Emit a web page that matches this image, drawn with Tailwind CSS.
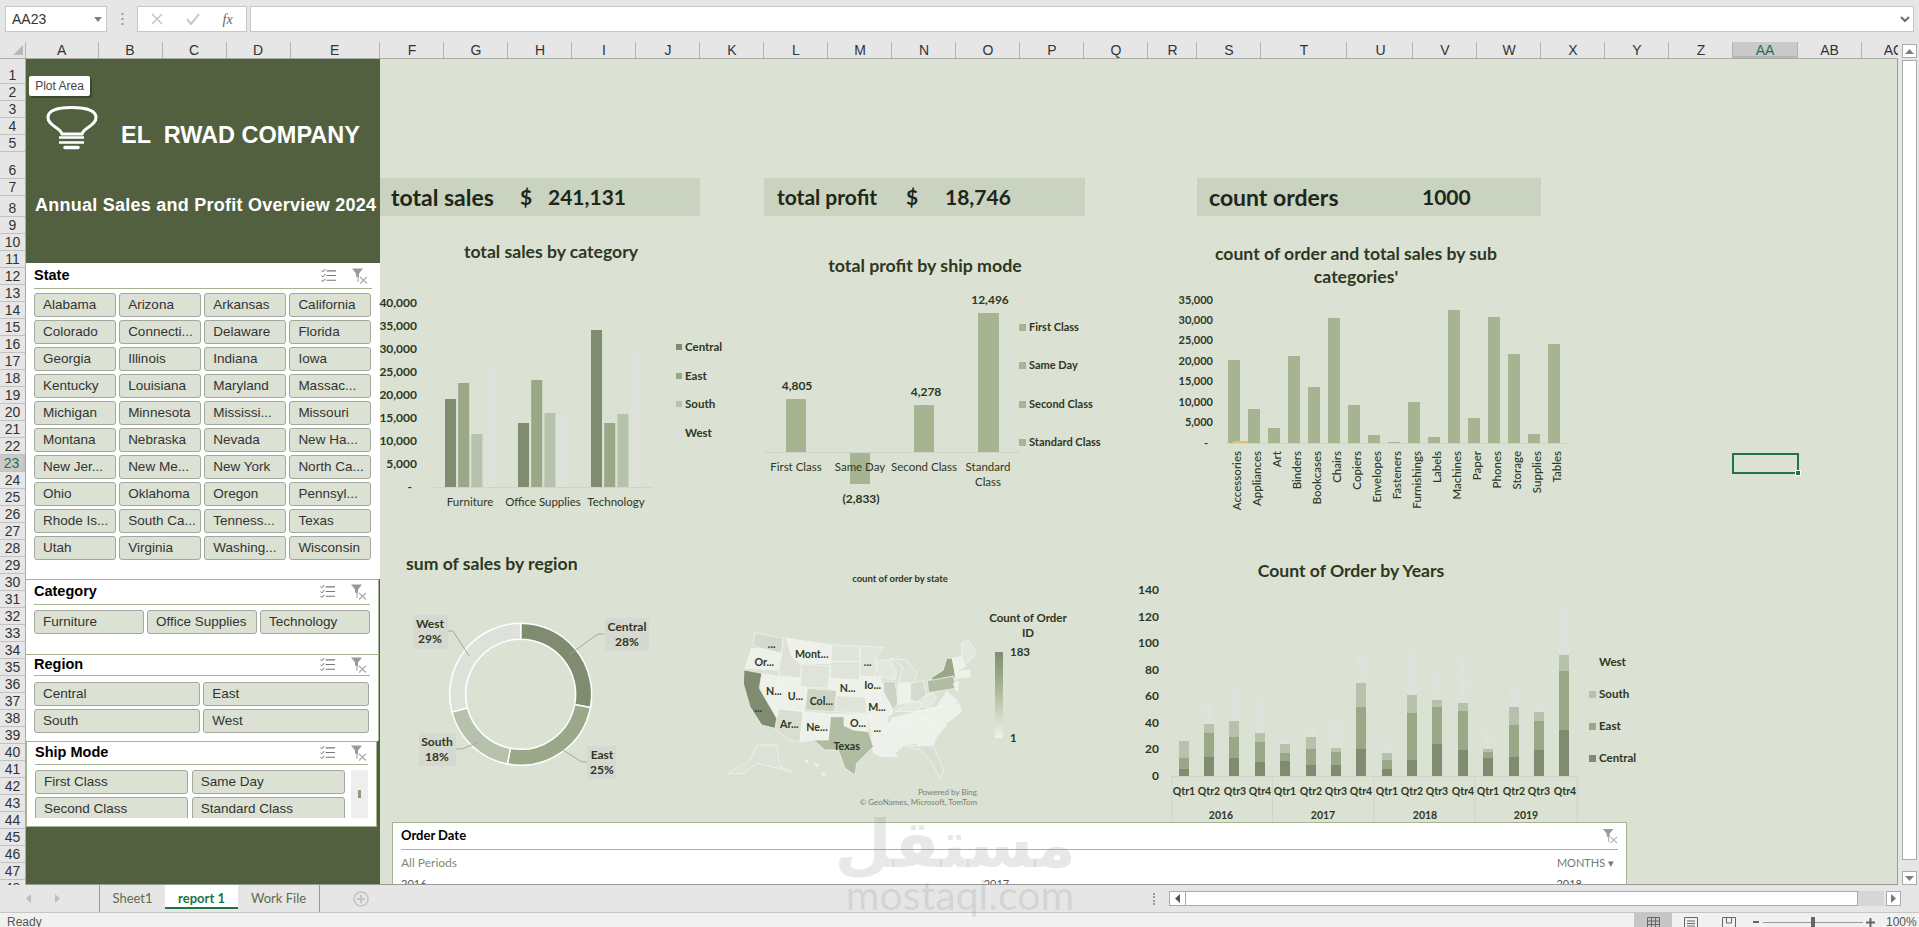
<!DOCTYPE html>
<html lang="en">
<head>
<meta charset="UTF-8">
<title>report 1 - Excel</title>
<script src="https://cdn.jsdelivr.net/npm/@tailwindcss/browser@4"></script>
</head>
<body class="relative w-[1919px] h-[927px] overflow-hidden bg-[#e6e6e6] font-['Liberation_Sans',sans-serif] text-[#222]">

<!-- shared icons -->
<svg width="0" height="0" class="absolute">
  <defs>
    <symbol id="multi" viewBox="0 0 16 15">
      <path d="M0.5 2l1.5 1.5 2.5-3M0.5 7.5l1.5 1.5 2.5-3M0.5 12.5l1.5 1.5 2.5-3" fill="none" stroke="#666" stroke-width="1"/>
      <path d="M6 2.500h10M6 7.500h10M6 12.500h10" stroke="#777" stroke-width="1.200"/>
    </symbol>
    <symbol id="clear" viewBox="0 0 16 16">
      <path d="M0 0.500h11l-4 5v4l-3-1v-3z" fill="#999"/>
      <path d="M6 8v6M8 9l7 6.500M15 9l-7 6.500" fill="none" stroke="#aaa" stroke-width="1.100"/>
    </symbol>
    <pattern id="dots" width="3" height="3" patternUnits="userSpaceOnUse">
      <rect width="3" height="3" fill="#e0e3db"/>
      <circle cx="1" cy="1" r=".6" fill="#d3d7cd"/>
    </pattern>
  </defs>
</svg>

<!-- name box + formula bar -->
<div class="h-[42px] flex items-start pt-[6px] pl-[5px]">
  <div class="w-[102px] h-[26px] bg-white border border-[#c6c6c6] flex items-center justify-between pl-[6px] pr-[4px] text-[14px] text-[#333]">AA23<svg width="8" height="5"><path d="M0 0h8l-4 5z" fill="#7c8471"/></svg></div>
  <div class="w-[30px] h-[26px] flex items-center justify-center"><svg width="3" height="12"><path d="M1.500 0v2M1.500 5v2M1.500 10v2" stroke="#999" stroke-width="2"/></svg></div>
  <div class="w-[110px] h-[26px] bg-white border border-[#c6c6c6] flex items-center justify-around px-[2px]">
    <svg width="12" height="12"><path d="M1 1l10 10M11 1L1 11" stroke="#c4c4c4" stroke-width="1.500"/></svg>
    <svg width="14" height="12"><path d="M1 6l4 5 8-10" fill="none" stroke="#c4c4c4" stroke-width="2"/></svg>
    <span class="font-['Liberation_Serif',serif] italic text-[14px] text-[#666]">fx</span>
  </div>
  <div class="ml-[3px] w-[1664px] h-[26px] bg-white border border-[#c6c6c6] flex items-center justify-end pr-[3px]"><svg width="10" height="7"><path d="M1 1l4 4 4-4" fill="none" stroke="#6b7263" stroke-width="2"/></svg></div>
</div>

<!-- column headers -->
<div class="h-[17px] flex overflow-hidden border-b border-[#ababab] text-[14px] leading-[17px] text-center [&>div]:shrink-0 [&>div]:border-r [&>div]:border-[#b5b5b5] text-[#333]">
  <div class="w-[26px] relative"><svg class="absolute left-[13px] top-[3px]" width="10" height="10"><path d="M10 0v10H0z" fill="#b9b9b9"/></svg></div>
  <div class="w-[72.500px]">A</div><div class="w-[64px]">B</div><div class="w-[64px]">C</div><div class="w-[64px]">D</div><div class="w-[89.500px]">E</div>
  <div class="w-[64px] pl-px">F</div><div class="w-[64px] pl-px">G</div><div class="w-[64px] pl-px">H</div><div class="w-[64px] pl-px">I</div><div class="w-[64px] pl-px">J</div><div class="w-[64px] pl-px">K</div>
  <div class="w-[64px] pl-px">L</div><div class="w-[64px] pl-px">M</div><div class="w-[64px] pl-px">N</div><div class="w-[64px] pl-px">O</div><div class="w-[64px] pl-px">P</div><div class="w-[64px] pl-px">Q</div>
  <div class="w-[49px] pl-px">R</div><div class="w-[64px] pl-px">S</div><div class="w-[86px] pl-px">T</div><div class="w-[66px] pl-[2px]">U</div><div class="w-[64px] pl-px">V</div><div class="w-[64px] pl-px">W</div>
  <div class="w-[64px] pl-px">X</div><div class="w-[64px] pl-px">Y</div><div class="w-[64px] pl-px">Z</div>
  <div class="w-[65px] bg-[#c9c9c9] border-b-2 border-b-[#217346] text-[#217346]">AA</div>
  <div class="w-[64px]">AB</div><div class="w-[64px]">AC</div>
</div>

<div class="h-[826px] flex">
  <!-- row headers -->
  <div class="w-[26px] h-[826px] overflow-hidden bg-[#e6e6e6] text-[14px] leading-[16px] text-[#333] text-center border-r border-[#ababab] [&>div]:border-b [&>div]:border-[#c2c2c2] [&>div]:flex [&>div]:items-end [&>div]:justify-center">
    <div class="h-[25px]">1</div><div class="h-[17px]">2</div><div class="h-[17px]">3</div><div class="h-[17px]">4</div><div class="h-[17px]">5</div>
    <div class="h-[27px]">6</div><div class="h-[17px]">7</div><div class="h-[21px]">8</div><div class="h-[17px]">9</div><div class="h-[17px]">10</div>
    <div class="h-[17px]">11</div><div class="h-[17px]">12</div><div class="h-[17px]">13</div><div class="h-[17px]">14</div><div class="h-[17px]">15</div>
    <div class="h-[17px]">16</div><div class="h-[17px]">17</div><div class="h-[17px]">18</div><div class="h-[17px]">19</div><div class="h-[17px]">20</div>
    <div class="h-[17px]">21</div><div class="h-[17px]">22</div>
    <div class="h-[17px] bg-[#c9c9c9] text-[#217346] border-r-2 border-r-[#217346]">23</div>
    <div class="h-[17px]">24</div><div class="h-[17px]">25</div><div class="h-[17px]">26</div><div class="h-[17px]">27</div><div class="h-[17px]">28</div>
    <div class="h-[17px]">29</div><div class="h-[17px]">30</div><div class="h-[17px]">31</div><div class="h-[17px]">32</div><div class="h-[17px]">33</div>
    <div class="h-[17px]">34</div><div class="h-[17px]">35</div><div class="h-[17px]">36</div><div class="h-[17px]">37</div><div class="h-[17px]">38</div>
    <div class="h-[17px]">39</div><div class="h-[17px]">40</div><div class="h-[17px]">41</div><div class="h-[17px]">42</div><div class="h-[17px]">43</div>
    <div class="h-[17px]">44</div><div class="h-[17px]">45</div><div class="h-[17px]">46</div><div class="h-[17px]">47</div><div class="h-[17px]">48</div>
  </div>

  <!-- sheet -->
  <div class="relative w-[1872px] h-[826px] bg-[#dbe1d3] overflow-hidden border-b border-[#9a9a9a]">

    <!-- left dark panel -->
    <div class="w-[354px] h-[826px] bg-[#526040] flex flex-col">
      <div class="h-[204px] shrink-0 relative text-white font-bold">
        <svg class="absolute left-[20px] top-[47px]" width="54" height="46" viewBox="47 107 54 46">
          <path d="M63 135C61 128 49 127 49 118.500C49 111 60 108.500 72.500 108.500C85 108.500 97 111 97 118.500C97 127 85 128 83 135Z" fill="none" stroke="#fff" stroke-width="3"/>
          <path d="M60 138.500H85M60 143.500H85" stroke="#fff" stroke-width="2.500"/>
          <path d="M66 148.500H79" stroke="#fff" stroke-width="3.500" stroke-linecap="round"/>
        </svg>
        <div class="absolute left-[95px] top-[63px] text-[23.500px] leading-[26px] whitespace-pre">EL  RWAD COMPANY</div>
        <div class="absolute left-[9px] top-[136px] text-[18px] leading-[20px] tracking-[.25px] whitespace-nowrap">Annual Sales and Profit Overview 2024</div>
        <div class="absolute left-[3px] top-[17px] w-[61px] h-[20px] bg-white rounded-[2px] text-[#444] font-normal text-[12px] leading-[20px] text-center shadow-[2px_2px_0_#3c4630]">Plot Area</div>
      </div>

      <!-- State slicer -->
      <div class="h-[316px] shrink-0 bg-white px-[8px]">
        <div class="h-[26px] flex items-center justify-between border-b border-[#a7b492] text-[14.500px] font-bold text-black">State
          <span class="flex gap-[16px] mr-[4px]"><svg width="15" height="15"><use href="#multi"/></svg><svg width="16" height="16"><use href="#clear"/></svg></span>
        </div>
        <div class="mt-[4px] w-[337px] grid grid-cols-4 gap-x-[3.500px] gap-y-[3px] text-[13.500px] text-[#333] [&>div]:h-[24px] [&>div]:leading-[22px] [&>div]:pl-[8px] [&>div]:bg-[#dbe1d3] [&>div]:border [&>div]:border-[#a3a79d] [&>div]:rounded-[3px] [&>div]:whitespace-nowrap [&>div]:overflow-hidden">
          <div>Alabama</div><div>Arizona</div><div>Arkansas</div><div>California</div>
          <div>Colorado</div><div>Connecti...</div><div>Delaware</div><div>Florida</div>
          <div>Georgia</div><div>Illinois</div><div>Indiana</div><div>Iowa</div>
          <div>Kentucky</div><div>Louisiana</div><div>Maryland</div><div>Massac...</div>
          <div>Michigan</div><div>Minnesota</div><div>Mississi...</div><div>Missouri</div>
          <div>Montana</div><div>Nebraska</div><div>Nevada</div><div>New Ha...</div>
          <div>New Jer...</div><div>New Me...</div><div>New York</div><div>North Ca...</div>
          <div>Ohio</div><div>Oklahoma</div><div>Oregon</div><div>Pennsyl...</div>
          <div>Rhode Is...</div><div>South Ca...</div><div>Tenness...</div><div>Texas</div>
          <div>Utah</div><div>Virginia</div><div>Washing...</div><div>Wisconsin</div>
        </div>
      </div>

      <!-- Category slicer -->
      <div class="h-[75px] shrink-0 w-[353px] bg-white px-[8px] border-t border-r border-[#a7b492]">
        <div class="h-[25px] flex items-center justify-between border-b border-[#a7b492] text-[14.500px] font-bold text-black">Category
          <span class="flex gap-[16px] mr-[3px]"><svg width="15" height="15"><use href="#multi"/></svg><svg width="16" height="16"><use href="#clear"/></svg></span>
        </div>
        <div class="mt-[5px] flex gap-[3.500px] text-[13.500px] text-[#333] [&>div]:w-[109.500px] [&>div]:h-[24px] [&>div]:leading-[22px] [&>div]:pl-[8px] [&>div]:bg-[#dbe1d3] [&>div]:border [&>div]:border-[#a3a79d] [&>div]:rounded-[3px]">
          <div>Furniture</div><div>Office Supplies</div><div>Technology</div>
        </div>
      </div>

      <!-- Region slicer -->
      <div class="h-[87px] shrink-0 w-[353px] bg-white px-[8px] border-t border-r border-[#a7b492]">
        <div class="h-[21px] flex items-center justify-between border-b border-[#a7b492] text-[14.500px] font-bold text-black">Region
          <span class="flex gap-[16px] mr-[3px]"><svg width="15" height="15"><use href="#multi"/></svg><svg width="16" height="16"><use href="#clear"/></svg></span>
        </div>
        <div class="mt-[6px] w-[335px] grid grid-cols-2 gap-x-[3.500px] gap-y-[3px] text-[13.500px] text-[#333] [&>div]:h-[24px] [&>div]:leading-[22px] [&>div]:pl-[8px] [&>div]:bg-[#dbe1d3] [&>div]:border [&>div]:border-[#a3a79d] [&>div]:rounded-[3px]">
          <div>Central</div><div>East</div><div>South</div><div>West</div>
        </div>
      </div>

      <!-- Ship Mode slicer -->
      <div class="h-[86px] shrink-0 w-[351px] bg-white px-[8px] border border-[#a7b492]">
        <div class="h-[23px] flex items-center justify-between border-b border-[#a7b492] text-[14.500px] font-bold text-black">Ship Mode
          <span class="flex gap-[16px] mr-[1px]"><svg width="15" height="15"><use href="#multi"/></svg><svg width="16" height="16"><use href="#clear"/></svg></span>
        </div>
        <div class="mt-[5px] h-[48px] flex overflow-hidden">
          <div class="w-[311px] grid grid-cols-2 gap-x-[3.500px] gap-y-[3px] text-[13.500px] text-[#333] [&>div]:h-[24px] [&>div]:leading-[22px] [&>div]:pl-[8px] [&>div]:bg-[#dbe1d3] [&>div]:border [&>div]:border-[#a3a79d] [&>div]:rounded-[3px]">
            <div>First Class</div><div>Same Day</div><div>Second Class</div><div>Standard Class</div>
          </div>
          <div class="ml-[6px] w-[17px] h-[48px] bg-[#eeeeee] flex items-center justify-center"><div class="w-[3px] h-[8px] bg-[#8c9880]"></div></div>
        </div>
      </div>
    </div>

    <!-- KPI cards -->
    <div class="absolute left-[354px] top-[119px] w-[320px] h-[38px] bg-[#c9d3bf] flex items-center pl-[11px] font-['Lato',sans-serif] font-bold text-[21px] text-[#20261a]"><span class="w-[129px] text-[23px]">total sales</span><span class="w-[28px]">$</span><span>241,131</span></div>
    <div class="absolute left-[738px] top-[119px] w-[321px] h-[38px] bg-[#c9d3bf] flex items-center pl-[13px] font-['Lato',sans-serif] font-bold text-[21px] text-[#20261a]"><span class="w-[129px]">total profit</span><span class="w-[39px]">$</span><span>18,746</span></div>
    <div class="absolute left-[1171px] top-[119px] w-[344px] h-[38px] bg-[#c9d3bf] flex items-center pl-[12px] font-['Lato',sans-serif] font-bold text-[21px] text-[#20261a]"><span class="w-[213px] text-[23px]">count orders</span><span>1000</span></div>

    <!-- charts: viewBox uses window coordinates -->
    <svg class="absolute left-0 top-0 font-['Lato',sans-serif]" width="1872" height="826" viewBox="26 59 1872 826">
      <!-- total sales by category -->
      <g fill="#2e3722">
        <text x="551" y="258" text-anchor="middle" font-size="17.600" font-weight="700">total sales by category</text>
        <g font-size="12" font-weight="700" text-anchor="end">
          <text x="417" y="307">40,000</text><text x="417" y="330">35,000</text><text x="417" y="353">30,000</text><text x="417" y="376">25,000</text><text x="417" y="399">20,000</text><text x="417" y="422">15,000</text><text x="417" y="445">10,000</text><text x="417" y="468">5,000</text><text x="412" y="491">-</text>
        </g>
        <g font-size="11.500" text-anchor="middle">
          <text x="470" y="506">Furniture</text><text x="543" y="506">Office Supplies</text><text x="616" y="506">Technology</text>
        </g>
        <g font-size="11.500" font-weight="700">
          <text x="685" y="351">Central</text><text x="685" y="380">East</text><text x="685" y="408">South</text><text x="685" y="437">West</text>
        </g>
      </g>
      <rect x="676" y="344" width="6" height="6" fill="#7f8c6f"/><rect x="676" y="373" width="6" height="6" fill="#9ba888"/><rect x="676" y="401" width="6" height="6" fill="#b6c2ab"/><rect x="676" y="430" width="6" height="6" fill="url(#dots)"/>
      <path d="M434 487.500H653" stroke="#cfd4c8"/>
      <g id="cat-bars"></g>

      <!-- total profit by ship mode -->
      <g fill="#2e3722">
        <text x="925" y="272" text-anchor="middle" font-size="17.800" font-weight="700">total profit by ship mode</text>
        <g font-size="12" font-weight="700" text-anchor="middle">
          <text x="797" y="390">4,805</text><text x="990" y="304">12,496</text><text x="926" y="396">4,278</text><text x="861" y="503">(2,833)</text>
        </g>
      </g>
      <path d="M764 452.500H1020" stroke="#cfd4c8"/>
      <g fill="#a7b492">
        <rect x="786" y="399" width="20" height="53"/><rect x="850" y="453" width="20" height="31"/><rect x="914" y="405" width="20" height="47"/><rect x="978" y="313" width="21" height="139"/>
        <rect x="1019" y="324" width="7" height="7"/><rect x="1019" y="362" width="7" height="7"/><rect x="1019" y="401" width="7" height="7"/><rect x="1019" y="439" width="7" height="7"/>
      </g>
      <g fill="#2e3722">
        <g font-size="11.500" text-anchor="middle">
          <text x="796" y="471">First Class</text><text x="860" y="471">Same Day</text><text x="924" y="471">Second Class</text><text x="988" y="471">Standard</text><text x="988" y="486">Class</text>
        </g>
        <g font-size="11" font-weight="700">
          <text x="1029" y="331">First Class</text><text x="1029" y="369">Same Day</text><text x="1029" y="408">Second Class</text><text x="1029" y="446">Standard Class</text>
        </g>
      </g>

      <!-- count of order and total sales by sub categories -->
      <g fill="#2e3722">
        <text x="1356" y="260" text-anchor="middle" font-size="17.600" font-weight="700">count of order and total sales by sub</text>
        <text x="1356" y="283" text-anchor="middle" font-size="17.600" font-weight="700">categories'</text>
        <g font-size="11" font-weight="700" text-anchor="end">
          <text x="1213" y="304">35,000</text><text x="1213" y="324">30,000</text><text x="1213" y="344">25,000</text><text x="1213" y="365">20,000</text><text x="1213" y="385">15,000</text><text x="1213" y="406">10,000</text><text x="1213" y="426">5,000</text><text x="1208" y="447">-</text>
        </g>
      </g>
      <path d="M1226 443.500H1566" stroke="#cfd4c8"/>
      <g id="sub-bars"></g>
      <rect x="1233" y="441" width="15" height="2" fill="#e0c070"/>
      <g fill="#2e3722" font-size="11.500" font-weight="500" text-anchor="end">
        <text transform="translate(1241 451) rotate(-90)">Accessories</text><text transform="translate(1261 451) rotate(-90)">Appliances</text><text transform="translate(1281 451) rotate(-90)">Art</text><text transform="translate(1301 451) rotate(-90)">Binders</text><text transform="translate(1321 451) rotate(-90)">Bookcases</text><text transform="translate(1341 451) rotate(-90)">Chairs</text><text transform="translate(1361 451) rotate(-90)">Copiers</text><text transform="translate(1381 451) rotate(-90)">Envelopes</text><text transform="translate(1401 451) rotate(-90)">Fasteners</text><text transform="translate(1421 451) rotate(-90)">Furnishings</text><text transform="translate(1441 451) rotate(-90)">Labels</text><text transform="translate(1461 451) rotate(-90)">Machines</text><text transform="translate(1481 451) rotate(-90)">Paper</text><text transform="translate(1501 451) rotate(-90)">Phones</text><text transform="translate(1521 451) rotate(-90)">Storage</text><text transform="translate(1541 451) rotate(-90)">Supplies</text><text transform="translate(1561 451) rotate(-90)">Tables</text>
      </g>

      <!-- sum of sales by region -->
      <text x="406" y="570" font-size="17.600" font-weight="700" fill="#2e3722">sum of sales by region</text>
      <g stroke="#fff" stroke-width="1.500">
        <path d="M520.700 623.300A71 71 0 0 1 590.400 707.600L574.700 704.600A55 55 0 0 0 520.700 639.300Z" fill="#7f8c6f"/>
        <path d="M590.400 707.600A71 71 0 0 1 507.400 764L510.400 748.300A55 55 0 0 0 574.700 704.600Z" fill="#9ba888"/>
        <path d="M507.400 764A71 71 0 0 1 451.900 711.900L467.400 708A55 55 0 0 0 510.400 748.300Z" fill="#b6c2ab"/>
        <path d="M451.900 711.900A71 71 0 0 1 520.700 623.300L520.700 639.300A55 55 0 0 0 467.400 708Z" fill="url(#dots)"/>
      </g>
      <g fill="#d6d9d2">
        <rect x="413" y="615" width="35" height="34"/><rect x="605" y="618" width="44" height="33"/><rect x="587" y="746" width="29" height="33"/><rect x="419" y="733" width="37" height="33"/>
      </g>
      <g fill="none" stroke="#a5a9a0">
        <path d="M448 631H453L469 656"/><path d="M604 634H598L570 654"/><path d="M587 762H582L558 747"/><path d="M456 749H462L479 742"/>
      </g>
      <g fill="#2e3722" font-size="12" font-weight="700" text-anchor="middle">
        <text x="430" y="628">West</text><text x="430" y="643">29%</text><text x="627" y="631">Central</text><text x="627" y="646">28%</text><text x="602" y="759">East</text><text x="602" y="774">25%</text><text x="437" y="746">South</text><text x="437" y="761">18%</text>
      </g>

      <!-- count of order by state -->
      <text x="900" y="582" text-anchor="middle" font-size="9.500" font-weight="700" fill="#2e3722">count of order by state</text>
      <svg x="720" y="560" width="360" height="260" viewBox="0 0 1080 780">
        <g stroke="#f5f7f2" stroke-width="2" fill="#eef1ea">
          <path d="M105 218L190 235L185 280L120 265L100 255Z" fill="#d4dacd"/>
          <path d="M95 265L120 265L185 280L172 330L75 325Z"/>
          <path d="M125 340L190 352L175 445L170 475L118 385Z"/>
          <path d="M190 235L200 235L215 290L245 315L240 355L175 345L185 280Z" fill="#dde1d8"/>
          <path d="M200 235L335 255L330 310L245 310L215 290Z"/>
          <path d="M245 312L330 318L325 385L240 380Z" fill="#dfe3da"/>
          <path d="M190 352L240 355L240 380L262 385L250 455L178 445Z"/>
          <path d="M178 447L250 455L240 545L205 540L165 505L170 475Z" fill="#d9ded2"/>
          <path d="M262 385L350 392L345 455L255 450Z" fill="#cdd4c4"/>
          <path d="M250 455L330 462L325 540L280 540L240 545Z"/>
          <path d="M335 255L418 258L420 305L333 305Z" fill="#dfe3da"/>
          <path d="M333 305L420 305L420 360L330 355Z" fill="#dfe3da"/>
          <path d="M330 357L420 362L435 410L350 405L350 392L327 385Z"/>
          <path d="M350 407L437 412L440 460L345 455Z" fill="#dfe3da"/>
          <path d="M330 462L442 462L445 515L395 510L372 495L372 470L330 470Z"/>
          <path d="M420 258L490 262L465 300L470 330L465 350L420 350Z" fill="#e1e5dc"/>
          <path d="M420 350L480 350L490 385L480 395L432 395Z"/>
          <path d="M433 397L490 392L520 440L515 465L445 470L440 430Z"/>
          <path d="M445 472L505 468L495 520L455 525Z"/>
          <path d="M455 527L495 525L495 545L535 590L490 590L460 580Z"/>
          <path d="M468 300L510 300L530 335L525 360L480 350L470 325Z" fill="#e3e7de"/>
          <path d="M490 365L525 365L535 430L520 450L490 395Z" fill="#ccd3c3"/>
          <path d="M510 295L560 300L590 340L580 370L535 365L550 320Z" fill="#dde1d8"/>
          <path d="M535 370L570 370L570 425L533 435Z"/>
          <path d="M572 370L610 362L620 405L590 425L572 420Z" fill="#d6dbcf"/>
          <path d="M525 455L570 425L590 425L615 430L590 455Z" fill="#e3e7de"/>
          <path d="M515 475L590 455L640 445L610 480L510 490Z"/>
          <path d="M495 490L535 488L535 575L498 570Z"/>
          <path d="M537 488L575 483L590 550L550 555L540 570Z"/>
          <path d="M578 480L620 478L650 530L640 555L593 555Z"/>
          <path d="M555 558L640 558L672 630L660 655L630 600L600 570Z" fill="#dadfd3"/>
          <path d="M622 478L660 475L680 495L652 528Z"/>
          <path d="M612 478L640 445L715 430L725 455L680 490Z"/>
          <path d="M590 455L650 440L680 395L715 425L640 445Z"/>
          <path d="M618 405L640 400L650 415L625 445L600 435Z" fill="#e3e7de"/>
          <path d="M622 362L700 348L708 385L626 398Z" fill="#b1bda3"/>
          <path d="M632 355L670 330L680 295L697 295L708 360L700 348L640 360Z" fill="#9ba888"/>
          <path d="M725 250L745 240L770 280L735 315L725 310Z" fill="#e3e7de"/>
          <path d="M697 295L725 290L735 320L705 335Z"/>
          <path d="M705 335L750 330L750 350L708 355Z"/>
          <path d="M705 385L700 370L715 365L712 395Z"/>
          <path d="M110 555L170 555L180 620L215 635L175 625L110 610L70 640L25 640L90 600Z" fill="#dde1d8"/>
          <path d="M255 600l10 4-6 5zM285 610l12 6-8 4zM305 638l12 4-8 8z"/>
          <path d="M332 470L372 470L372 497L400 510L445 515L460 560L410 610L405 645L375 625L355 570L315 570L280 540L325 540Z" fill="#b1bda3"/>
          <path d="M72 330L125 340L118 385L170 475L165 505L125 495L90 440L70 370Z" fill="#7f8c6f"/>
        </g>
        <g font-size="32" font-weight="700" fill="#2e3722" text-anchor="middle">
          <text x="155" y="265">...</text><text x="275" y="294">Mont...</text><text x="133" y="318">Or...</text><text x="443" y="317">...</text><text x="383" y="396">N...</text><text x="458" y="387">Io...</text><text x="162" y="405">N...</text><text x="226" y="419">U...</text><text x="304" y="434">Col...</text><text x="471" y="452">M...</text><text x="115" y="455">...</text><text x="414" y="501">O...</text><text x="208" y="503">Ar...</text><text x="291" y="513">Ne...</text><text x="472" y="515">...</text><text x="380" y="569">Texas</text>
        </g>
      </svg>
      <defs><linearGradient id="heat" x1="0" y1="0" x2="0" y2="1"><stop offset="0" stop-color="#7f8c6f"/><stop offset=".4" stop-color="#a7b492"/><stop offset="1" stop-color="#f0f2ed"/></linearGradient></defs>
      <rect x="995" y="652" width="8" height="86" fill="url(#heat)"/>
      <g fill="#2e3722" font-size="11.500" font-weight="700">
        <text x="1028" y="622" text-anchor="middle">Count of Order</text><text x="1028" y="637" text-anchor="middle">ID</text><text x="1010" y="656">183</text><text x="1010" y="742">1</text>
      </g>
      <g fill="#7a7f74" font-size="8" text-anchor="end">
        <text x="977" y="795">Powered by Bing</text><text x="977" y="805">© GeoNames, Microsoft, TomTom</text>
      </g>

      <!-- Count of Order by Years -->
      <g fill="#2e3722">
        <text x="1351" y="577" text-anchor="middle" font-size="17.600" font-weight="700">Count of Order by Years</text>
        <g font-size="12" font-weight="700" text-anchor="end">
          <text x="1159" y="594">140</text><text x="1159" y="621">120</text><text x="1159" y="647">100</text><text x="1159" y="674">80</text><text x="1159" y="700">60</text><text x="1159" y="727">40</text><text x="1159" y="753">20</text><text x="1159" y="780">0</text>
        </g>
        <g font-size="10.500" font-weight="700" text-anchor="middle">
          <text x="1184" y="795">Qtr1</text><text x="1209" y="795">Qtr2</text><text x="1235" y="795">Qtr3</text><text x="1260" y="795">Qtr4</text><text x="1285" y="795">Qtr1</text><text x="1311" y="795">Qtr2</text><text x="1336" y="795">Qtr3</text><text x="1361" y="795">Qtr4</text><text x="1387" y="795">Qtr1</text><text x="1412" y="795">Qtr2</text><text x="1437" y="795">Qtr3</text><text x="1463" y="795">Qtr4</text><text x="1488" y="795">Qtr1</text><text x="1514" y="795">Qtr2</text><text x="1539" y="795">Qtr3</text><text x="1565" y="795">Qtr4</text>
          <text x="1221" y="819">2016</text><text x="1323" y="819">2017</text><text x="1425" y="819">2018</text><text x="1526" y="819">2019</text>
        </g>
        <g font-size="11.500" font-weight="700">
          <text x="1599" y="666">West</text><text x="1599" y="698">South</text><text x="1599" y="730">East</text><text x="1599" y="762">Central</text>
        </g>
      </g>
      <rect x="1589" y="659" width="7" height="7" fill="url(#dots)"/><rect x="1589" y="691" width="7" height="7" fill="#b6c2ab"/><rect x="1589" y="723" width="7" height="7" fill="#9ba888"/><rect x="1589" y="755" width="7" height="7" fill="#7f8c6f"/>
      <path d="M1172 776.500H1577M1172 776V823M1272.500 776V823M1374 776V823M1475 776V823M1577 776V823" fill="none" stroke="#cfd4c8"/>
      <g id="year-bars"></g>
    </svg>

    <!-- Order Date timeline slicer -->
    <div class="absolute left-[366px] top-[763px] w-[1235px] h-[71px] bg-white border border-[#a7b492] px-[8px] font-['Lato',sans-serif]">
      <div class="h-[27px] flex items-center justify-between border-b border-[#a7b492] text-[13px] font-bold text-black">Order Date<svg width="15" height="16"><use href="#clear"/></svg></div>
      <div class="h-[26px] flex items-center justify-between text-[12px] text-[#7f8c6f]">All Periods<span class="text-[#777] text-[11px] pr-[4px]">MONTHS ▾</span></div>
      <div class="flex justify-between text-[11px] text-[#555] pr-[36px]"><span>2016</span><span class="pl-[10px]">2017</span><span>2018</span></div>
    </div>

    <!-- active cell -->
    <div class="absolute left-[1706px] top-[394px] w-[67px] h-[21px] border-2 border-[#217346]"><div class="absolute right-[-4px] bottom-[-4px] w-[6px] h-[6px] bg-[#217346] border border-white"></div></div>

    <div class="absolute left-[1871px] top-0 w-px h-[826px] bg-[#9a9a9a]"></div>
  </div>

  <!-- vertical scrollbar -->
  <div class="w-[21px] h-[826px] bg-[#e6e6e6] pl-[4px] relative">
    <div class="absolute left-0 top-[-18px] w-[21px] h-[18px] bg-[#e6e6e6]"></div>
    <div class="absolute left-[4px] top-[-15px] w-[15px] h-[14px] bg-white border border-[#ababab] flex items-center justify-center"><svg width="9" height="5"><path d="M0 5h9L4.500 0z" fill="#7c8471"/></svg></div>
    <div class="w-[15px] h-[800px] mt-px bg-white border border-[#ababab]"></div>
    <div class="absolute left-[4px] bottom-0 w-[15px] h-[14px] bg-white border border-[#ababab] flex items-center justify-center"><svg width="9" height="5"><path d="M0 0h9L4.500 5z" fill="#7c8471"/></svg></div>
  </div>
</div>

<!-- sheet tabs -->
<div class="h-[28px] flex items-center bg-[#e6e6e6] border-b border-[#c6c6c6] text-[13px] text-[#555]">
  <div class="w-[100px] h-full flex items-center pl-[26px] gap-[24px] border-r border-[#9a9a9a] shrink-0"><svg width="5" height="9"><path d="M5 0v9L0 4.500z" fill="#bdbdbd"/></svg><svg width="5" height="9"><path d="M0 0v9l5-4.500z" fill="#bdbdbd"/></svg></div>
  <div class="w-[65px] text-center font-['Lato',sans-serif] text-[#5d6b4f] shrink-0">Sheet1</div>
  <div class="w-[73px] h-[24px] self-start bg-white border-b-2 border-[#217346] text-center font-['Lato',sans-serif] font-bold leading-[26px] text-[#217346] shrink-0">report 1</div>
  <div class="w-[82px] h-full flex items-center justify-center font-['Lato',sans-serif] text-[#5d6b4f] border-r border-[#9a9a9a] shrink-0">Work File</div>
  <svg class="ml-[33px]" width="16" height="16"><circle cx="8" cy="8" r="7" fill="none" stroke="#c4c4c4" stroke-width="1.500"/><path d="M8 4v8M4 8h8" stroke="#c4c4c4" stroke-width="2"/></svg>
  <div class="ml-[784px] w-[3px] h-[12px] border-l-2 border-dotted border-[#999]"></div>
  <div class="ml-[13px] w-[689px] h-[15px] flex bg-white border border-[#ababab] items-center"><svg class="ml-[5px]" width="5" height="9"><path d="M5 0v9L0 4.500z" fill="#555"/></svg><div class="ml-[5px] h-full border-l border-[#ababab]"></div></div>
  <div class="w-[26px] h-[15px] bg-[#d6d6d6]"></div>
  <div class="ml-[2px] w-[15px] h-[15px] bg-white border border-[#ababab] flex items-center justify-center"><svg width="5" height="9"><path d="M0 0v9l5-4.500z" fill="#777"/></svg></div>
</div>

<!-- status bar -->
<div class="relative h-[14px] overflow-hidden bg-[#f1f1f1] text-[12px] leading-[14px] text-[#555]">
  <span class="relative top-[2px] pl-[7px]">Ready</span>
  <div class="absolute left-[1634px] top-0 h-[14px] flex items-center">
    <div class="w-[38px] h-[14px] bg-[#c6c6c6] flex items-center justify-center"><svg class="mt-[4px]" width="13" height="11"><path d="M.5.500h12v10H.5zM.5 4h12M.5 7.500h12M4.500.500v10M8.500.500v10" fill="none" stroke="#666"/></svg></div>
    <svg class="ml-[12px] mt-[4px]" width="14" height="11"><path d="M.5.500h13v10.500H.5zM3 4h8M3 6.500h8M3 9h8" fill="none" stroke="#666"/></svg>
    <svg class="ml-[24px] mt-[4px]" width="14" height="11"><path d="M.5 11V.500h13V11M4.500.500V6h5V.500" fill="none" stroke="#666"/></svg>
    <div class="ml-[17px] mt-[4px] w-[6px] h-[2px] bg-[#666]"></div>
    <div class="ml-[4px] mt-[4px] w-[100px] h-px bg-[#999] relative"><div class="absolute left-[48px] top-[-5px] w-[4px] h-[11px] bg-[#666]"></div></div>
    <svg class="ml-[3px] mt-[4px]" width="9" height="9"><path d="M4.500 0v9M0 4.500h9" stroke="#666" stroke-width="2"/></svg>
    <span class="ml-[11px] mt-[4px]">100%</span>
  </div>
</div>

<!-- watermark -->
<div class="absolute left-[844px] top-[805px] w-[232px] text-center text-[#8a8a8a]/20 pointer-events-none">
  <div class="font-['DejaVu_Sans',sans-serif] font-bold text-[66px] leading-[80px]" lang="ar" dir="rtl">مستقل</div>
  <div class="font-['Lato',sans-serif] text-[41px] leading-[38px] mt-[-9px]">mostaql.com</div>
</div>

<script>
  var colors = ['#7f8c6f', '#9ba888', '#b6c2ab', 'url(#dots)'];
  function bar(parent, x, y, w, h, fill) {
    var r = document.createElementNS('http://www.w3.org/2000/svg', 'rect');
    r.setAttribute('x', x); r.setAttribute('y', y);
    r.setAttribute('width', w); r.setAttribute('height', h);
    r.setAttribute('fill', fill);
    document.getElementById(parent).appendChild(r);
  }

  // total sales by category: x of the first bar in each group, top of each region
  [[445, 399, 383, 434, 366], [518, 423, 380, 413, 418], [591, 330, 423, 414, 350]].forEach(function (g) {
    for (var i = 0; i < 4; i++) bar('cat-bars', g[0] + i * 13.2, g[i + 1], 11, 487 - g[i + 1], colors[i]);
  });

  // sub category tops
  [360, 409, 428, 356, 387, 318, 405, 435, 442, 402, 437, 310, 418, 317, 354, 434, 344].forEach(function (top, i) {
    bar('sub-bars', 1228 + i * 20, top, 12, 443 - top, '#a7b492');
  });

  // cumulative stack heights measured per quarter
  var tops = [[657,624,573,564],[621,549,522,453],[624,561,513,405],[636,576,549,447],
              [633,609,582,570],[645,597,561,522],[645,606,594,507],[597,471,399,315],
              [657,630,609,573],[630,489,435,303],[582,471,450,363],[600,483,459,327],
              [624,606,597,537],[621,525,471,405],[600,513,486,450],[540,363,315,171]];
  var xs = [1179,1204,1229,1255,1280,1306,1331,1356,1382,1407,1432,1458,1483,1509,1534,1559];
  tops.forEach(function (t, q) {
    var prev = 678;
    t.forEach(function (top, i) {
      bar('year-bars', xs[q], 550 + top / 3, 10, (prev - top) / 3, colors[i]);
      prev = top;
    });
  });
</script>
</body>
</html>
